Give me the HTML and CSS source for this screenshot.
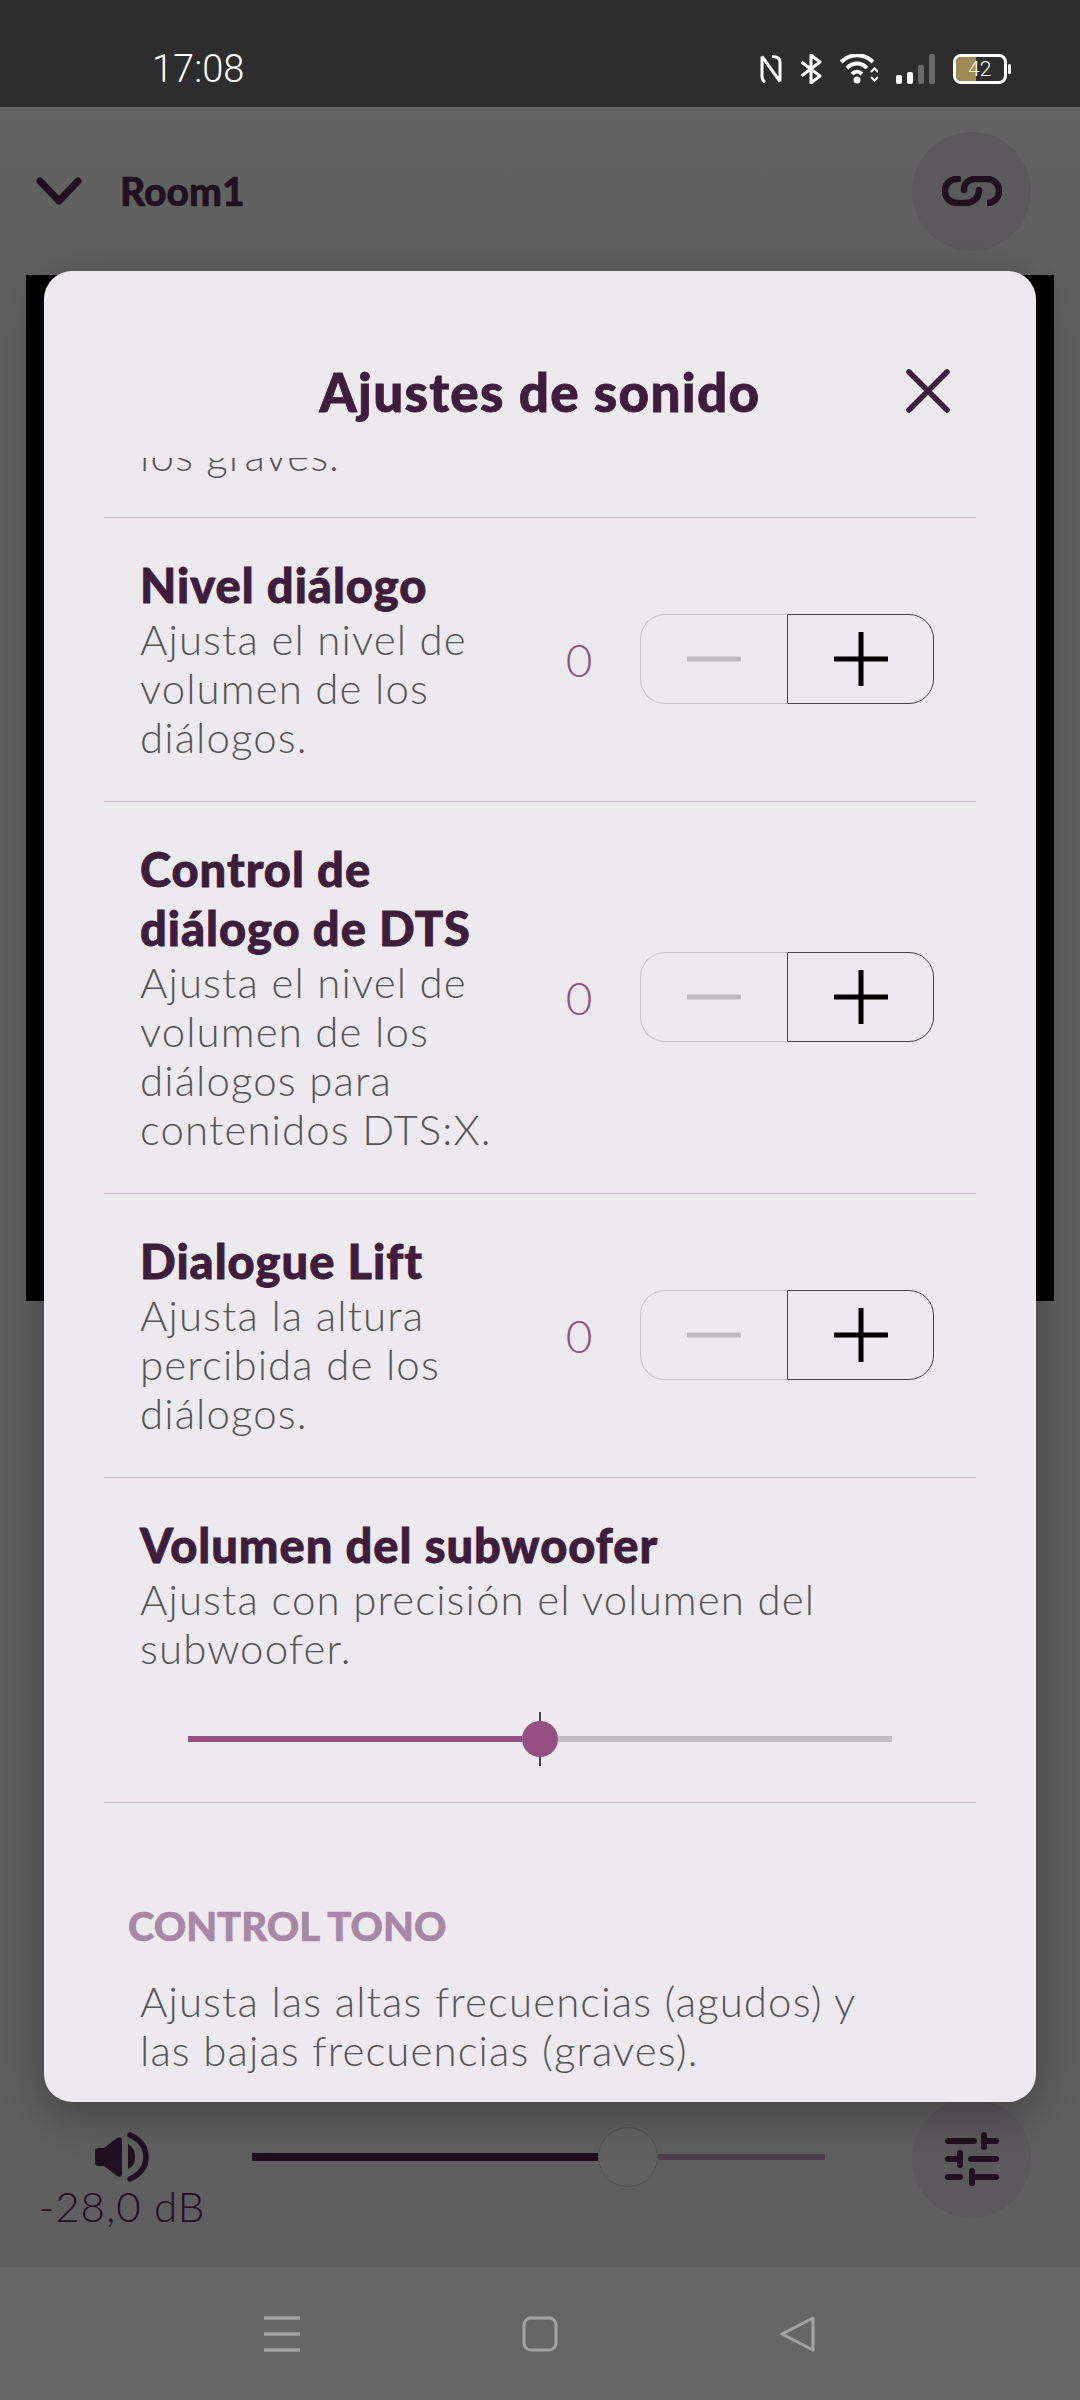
FILE: index.html
```html
<!DOCTYPE html>
<html>
  <head>
    <meta charset="UTF-8">
    <title>Ajustes de sonido</title>
    <link rel="stylesheet" href="styles.css">
  </head>
  <body>
    <svg class="defs" width="0" height="0">
      <symbol id="plus" viewBox="0 0 54 54"><path d="M27 1V53M1 27H53" fill="none" stroke="#000" stroke-width="5" stroke-linecap="round"/></symbol>
      <symbol id="minus" viewBox="0 0 54 54"><path d="M1 27H53" fill="none" stroke="#bdbbbf" stroke-width="5" stroke-linecap="round"/></symbol>
    </svg>

    <div class="status-bar">
      <span class="clock">17:08</span>
      <div class="status-icons">
        <svg width="22" height="28" viewBox="0 0 22 28"><path d="M2 1.500L20 26.500M2 1.500V21C2 24 3 26 5 27M12 1.500C17 1.500 20 3 20 7V26.500" fill="none" stroke="#fff" stroke-width="3"/></svg>
        <svg width="22" height="30" viewBox="0 0 22 30"><path d="M1.500 8L20 22L11 29V1L20 8L1.500 22" fill="none" stroke="#fff" stroke-width="3" stroke-linejoin="round"/></svg>
        <svg width="38" height="30" viewBox="0 0 38 30"><path d="M1 8C10 -1 24 -1 33 8M7 14C13 8 21 8 27 14M12 20C15 17 19 17 22 20" fill="none" stroke="#fff" stroke-width="4"/><circle cx="17" cy="26" r="3.500" fill="#fff"/><path d="M31 18L34.500 14.500L38 18M31 23L34.500 26.500L38 23" fill="none" stroke="#fff" stroke-width="2"/></svg>
        <div class="signal"><i class="on h1"></i><i class="on h2"></i><i class="h3"></i><i class="h4"></i></div>
        <div class="battery"><div class="battery-body"><div class="battery-fill"></div><span>42</span></div><div class="battery-tip"></div></div>
      </div>
    </div>

    <div class="app">
      <header class="app-header">
        <svg class="chevron" width="46" height="30" viewBox="0 0 46 30"><path d="M4 5L23 25L42 5" fill="none" stroke="#21101f" stroke-width="7" stroke-linecap="round" stroke-linejoin="round"/></svg>
        <span class="room-name">Room1</span>
        <div class="round-btn">
          <svg width="60" height="30" viewBox="0 0 60 30"><path d="M16 3H15C8 3 3 8 3 15S8 27 15 27H24C31 27 37 22 37 14M22 14C22 8 26 3 33 3H45C52 3 57 8 57 15S52 27 45 27H46" fill="none" stroke="#21101f" stroke-width="6.500" stroke-linecap="round"/></svg>
        </div>
      </header>
      <div class="video-panel"></div>
      <footer class="app-footer">
        <div class="volume">
          <svg width="54" height="50" viewBox="0 0 54 50"><path d="M3 16H9L22 6C24 4.500 27 5 27 8V42C27 45 24 45.500 22 44L9 34H3C1.500 34 0 33 0 31V19C0 17 1.500 16 3 16Z" fill="#21101f"/><path d="M33 12C39 16 40 20 40 25S39 34 33 37Z" fill="#21101f"/><path d="M35 3C48 9 51 18 51 25S48 41 35 47" fill="none" stroke="#21101f" stroke-width="5.500" stroke-linecap="round"/></svg>
          <span class="volume-label">-28,0 dB</span>
        </div>
        <div class="main-slider">
          <div class="main-fill"></div>
          <div class="main-thumb"></div>
          <div class="main-rest"></div>
        </div>
        <div class="round-btn">
          <svg width="54" height="54" viewBox="0 0 54 54"><path d="M3 9H29M39 3V15M39 9H51M3 27H15M15 21V33M26 27H51M3 45H15M27 39V51M27 45H51" stroke="#21101f" stroke-width="6" stroke-linecap="round" fill="none"/></svg>
        </div>
      </footer>
    </div>

    <div class="nav-bar">
      <svg width="36" height="36" viewBox="0 0 36 36"><path d="M0 2H36M0 18H36M0 34H36" stroke="#a3a3a3" stroke-width="3.500"/></svg>
      <svg width="36" height="36" viewBox="0 0 36 36"><rect x="2" y="2" width="32" height="32" rx="7" fill="none" stroke="#a3a3a3" stroke-width="3"/></svg>
      <svg width="36" height="36" viewBox="0 0 36 36"><path d="M33 2V34L2 18Z" fill="none" stroke="#a3a3a3" stroke-width="3" stroke-linejoin="round"/></svg>
    </div>

    <div class="modal">
      <div class="modal-header">
        <h1>Ajustes de sonido</h1>
        <svg class="close" width="44" height="44" viewBox="0 0 44 44"><path d="M3 3L41 41M41 3L3 41" stroke="#3e1c3b" stroke-width="5.500" stroke-linecap="round"/></svg>
      </div>
      <div class="modal-scroll">
        <div class="modal-content">
          <div class="row row-cut">
            <p class="desc">los graves.</p>
          </div>
          <div class="row">
            <div class="row-text">
              <h2>Nivel diálogo</h2>
              <p class="desc">Ajusta el nivel de volumen de los diálogos.</p>
            </div>
            <span class="value">0</span>
            <div class="stepper">
              <div class="step step-minus"><svg width="54" height="54"><use href="#minus"/></svg></div>
              <div class="step step-plus"><svg width="54" height="54"><use href="#plus"/></svg></div>
            </div>
          </div>
          <div class="row">
            <div class="row-text">
              <h2>Control de diálogo de DTS</h2>
              <p class="desc">Ajusta el nivel de volumen de los diálogos para contenidos DTS:X.</p>
            </div>
            <span class="value">0</span>
            <div class="stepper">
              <div class="step step-minus"><svg width="54" height="54"><use href="#minus"/></svg></div>
              <div class="step step-plus"><svg width="54" height="54"><use href="#plus"/></svg></div>
            </div>
          </div>
          <div class="row">
            <div class="row-text">
              <h2>Dialogue Lift</h2>
              <p class="desc">Ajusta la altura percibida de los diálogos.</p>
            </div>
            <span class="value">0</span>
            <div class="stepper">
              <div class="step step-minus"><svg width="54" height="54"><use href="#minus"/></svg></div>
              <div class="step step-plus"><svg width="54" height="54"><use href="#plus"/></svg></div>
            </div>
          </div>
          <div class="row row-slider">
            <h2>Volumen del subwoofer</h2>
            <p class="desc">Ajusta con precisión el volumen del subwoofer.</p>
            <div class="sub-slider">
              <div class="sub-fill"></div>
              <div class="sub-thumb"></div>
              <div class="sub-rest"></div>
            </div>
          </div>
          <div class="section">
            <h3>CONTROL TONO</h3>
            <p class="desc">Ajusta las altas frecuencias (agudos) y las bajas frecuencias (graves).</p>
          </div>
        </div>
      </div>
    </div>
  </body>
</html>
```

FILE: styles.css
```css
* {
  box-sizing: border-box;
}

body {
  display: flex;
  flex-direction: column;
  font-family: Lato, "Liberation Sans", sans-serif;
  height: 2400px;
  margin: 0;
  overflow: hidden;
  position: relative;
  width: 1080px;
}

.defs {
  position: absolute;
}

/* status bar */
.status-bar {
  align-items: center;
  background-color: #2d2d2d;
  color: #fff;
  display: flex;
  height: 107px;
  justify-content: space-between;
  padding: 30px 69px 0 152px;
}

.clock {
  font-family: Roboto, sans-serif;
  font-size: 38px;
  font-weight: 300;
}

.status-icons {
  align-items: center;
  display: flex;
  gap: 18px;
}

.signal {
  align-items: flex-end;
  display: flex;
  gap: 5px;
  height: 30px;
}

.signal i {
  background-color: #6a6a6a;
  border-radius: 2px;
  display: block;
  width: 6px;
}

.signal i.on {
  background-color: #fff;
}

.h1 { height: 9px; }
.h2 { height: 12px; }
.h3 { height: 19px; }
.h4 { height: 30px; }

.battery {
  align-items: center;
  display: flex;
  gap: 1px;
}

.battery-body {
  border: 3px solid #fff;
  border-radius: 8px;
  height: 30px;
  overflow: hidden;
  position: relative;
  width: 54px;
}

.battery-fill {
  background-color: #9c8c54;
  height: 100%;
  width: 20px;
}

.battery-body span {
  font-family: Roboto, sans-serif;
  font-size: 21px;
  font-weight: 300;
  left: 12px;
  line-height: 24px;
  position: absolute;
  top: 0;
}

.battery-tip {
  background-color: #fff;
  border-radius: 2px;
  height: 10px;
  width: 3px;
}

/* dimmed app behind the dialog */
.app {
  background: linear-gradient(#646364, #5f5f5f 10%, #5f5f60);
  display: flex;
  flex: 1;
  flex-direction: column;
}

.app-header {
  align-items: center;
  display: flex;
  height: 168px;
  padding: 0 49px 0 36px;
}

.chevron {
  margin-right: 38px;
}

.room-name {
  color: #21101f;
  font-size: 39px;
  font-weight: 900;
  -webkit-text-stroke: 0.600px #21101f;
}

.round-btn {
  align-items: center;
  background-color: #5c595c;
  border-radius: 50%;
  display: flex;
  flex-shrink: 0;
  height: 119px;
  justify-content: center;
  margin-left: auto;
  width: 119px;
}

.video-panel {
  background-color: #000;
  height: 1026px;
  margin: 0 26px;
}

.app-footer {
  align-items: flex-start;
  display: flex;
  height: 168px;
  margin-top: auto;
  padding: 0 49px 0 40px;
}

.volume {
  align-items: center;
  display: flex;
  flex-direction: column;
  margin-top: 33px;
  width: 164px;
}

.volume-label {
  color: #21101f;
  font-size: 42px;
  font-weight: 300;
  letter-spacing: 1px;
  line-height: 48px;
  white-space: nowrap;
}

.main-slider {
  align-items: center;
  display: flex;
  margin-left: 48px;
  margin-top: 28px;
  width: 573px;
}

.main-fill {
  background-color: #1f0c1f;
  height: 8px;
  width: 346px;
}

.main-thumb {
  background-color: #626262;
  border: 1px solid #505050;
  border-radius: 50%;
  height: 60px;
  width: 60px;
}

.main-rest {
  background-color: #4e3e4e;
  flex: 1;
  height: 6px;
}

.nav-bar {
  align-items: center;
  background-color: #666;
  display: flex;
  gap: 222px;
  height: 133px;
  justify-content: center;
}

/* dialog */
.modal {
  background-color: #ece9ef;
  border-radius: 28px;
  box-shadow: 0 12px 44px rgba(0, 0, 0, 0.3);
  display: flex;
  flex-direction: column;
  height: 1831px;
  left: 44px;
  position: absolute;
  top: 271px;
  width: 992px;
  z-index: 1;
}

.modal-header {
  align-items: center;
  display: flex;
  height: 187px;
  justify-content: center;
  padding-top: 53px;
  position: relative;
}

.modal-header h1 {
  color: #3e1c3b;
  font-size: 53px;
  font-weight: 900;
  letter-spacing: 1.300px;
  margin: 0;
  -webkit-text-stroke: 0.800px #3e1c3b;
}

.close {
  position: absolute;
  right: 86px;
  top: 98px;
}

.modal-scroll {
  flex: 1;
  overflow: hidden;
}

.modal-content {
  margin-top: -27px;
  padding: 0 60px;
}

.row {
  align-items: center;
  border-bottom: 1px solid #c9b4c9;
  display: flex;
  padding: 38px 42px 39px 36px;
}

.row-cut {
  padding-bottom: 37px;
  padding-top: 0;
}

.row-text {
  width: 360px;
}

h2 {
  color: #3e1c3b;
  font-size: 47px;
  font-weight: 900;
  letter-spacing: 1px;
  line-height: 59px;
  margin: 0;
  -webkit-text-stroke: 0.800px #3e1c3b;
}

.desc {
  color: #555;
  font-size: 42px;
  font-weight: 300;
  letter-spacing: 1.100px;
  line-height: 49px;
  margin: 0;
}

.value {
  color: #96507f;
  font-size: 46px;
  font-weight: 300;
  margin-left: auto;
  margin-right: 39px;
  text-align: center;
  width: 44px;
}

.stepper {
  display: flex;
  flex-shrink: 0;
  height: 90px;
  width: 294px;
}

.step {
  align-items: center;
  display: flex;
  justify-content: center;
  width: 147px;
}

.step-minus {
  border: 1px solid #c6c4c8;
  border-radius: 25px 0 0 25px;
  border-right: none;
}

.step-plus {
  border: 1px solid #444;
  border-radius: 0 25px 25px 0;
}

.row-slider {
  align-items: stretch;
  flex-direction: column;
  height: 325px;
  padding-bottom: 0;
}

.row-slider .desc {
  max-width: 700px;
}

.sub-slider {
  align-items: center;
  display: flex;
  height: 54px;
  margin: 39px 0 0 48px;
  width: 704px;
}

.sub-fill {
  background-color: #954f81;
  height: 6px;
  width: 334px;
}

.sub-thumb {
  background-color: #954f81;
  border-radius: 50%;
  height: 36px;
  position: relative;
  width: 36px;
}

.sub-thumb::before {
  background-color: #444;
  content: "";
  height: 54px;
  left: 17px;
  position: absolute;
  top: -9px;
  width: 2px;
  z-index: -1;
}

.sub-rest {
  background-color: #bfbdc1;
  flex: 1;
  height: 6px;
}

.section {
  padding: 98px 0 0 24px;
}

.section h3 {
  color: #a886a6;
  font-size: 40px;
  font-weight: 900;
  line-height: 50px;
  margin: 0 0 26px;
  -webkit-text-stroke: 0.600px #a886a6;
}

.section .desc {
  max-width: 790px;
  padding-left: 12px;
}
```
